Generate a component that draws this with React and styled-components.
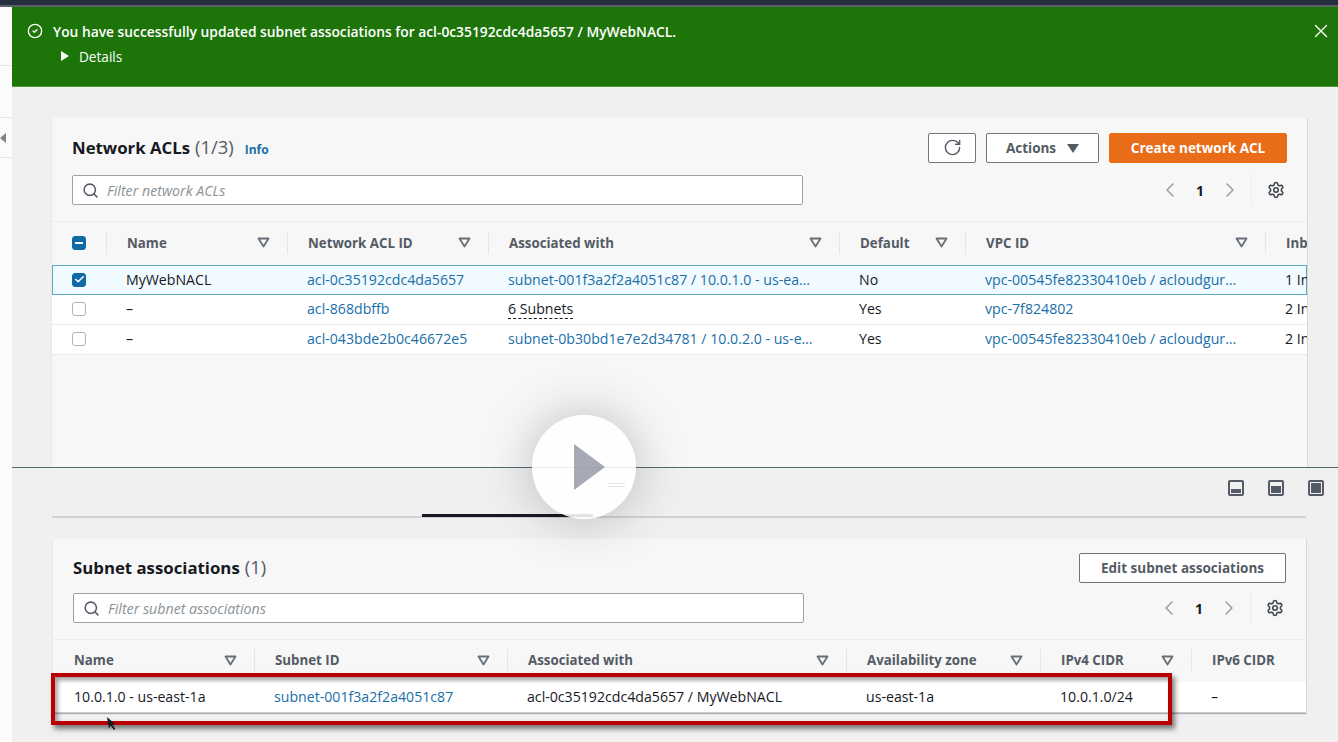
import React from 'react';
import styled, { createGlobalStyle } from 'styled-components';
import { ChevronLeft, ChevronRight, RotateCw, Search, Settings, X, CircleCheck, Check } from 'lucide-react';

const GlobalStyle = createGlobalStyle`
  html, body { margin: 0; padding: 0; }
  body {
    width: 1338px;
    height: 742px;
    overflow: hidden;
    background: #f0f0f0;
    font-family: "Open Sans", "Liberation Sans", sans-serif;
    font-size: 14px;
    color: #16191f;
  }
`;

const Page = styled.div`
  position: relative;
  width: 1338px;
  height: 742px;
  display: flex;
  flex-direction: column;
  overflow: hidden;
`;

const TopBar = styled.div`
  height: 5px;
  flex: none;
  background: #232f3e;
  border-bottom: 2px solid #5c6068;
`;

const Body = styled.div`
  flex: 1;
  display: flex;
  min-height: 0;
`;

const Sidebar = styled.aside`
  width: 12px;
  flex: none;
  background: #fbfbfb;
  display: flex;
  flex-direction: column;
`;

const SideBlock = styled.div`
  height: ${p => p.$h}px;
  flex: none;
  display: flex;
  align-items: center;
  border-bottom: 1px solid #e4e6e6;
`;

const SideArrow = styled.div`
  width: 0;
  height: 0;
  border-top: 5px solid transparent;
  border-bottom: 5px solid transparent;
  border-right: 6px solid #7d8389;
`;

const Main = styled.main`
  flex: 1;
  min-width: 0;
  display: flex;
  flex-direction: column;
`;

const Flash = styled.div`
  height: 80px;
  flex: none;
  box-sizing: border-box;
  background: #1d7409;
  border-bottom: 1px solid #4f9a3f;
  color: #fff;
  padding: 13px 6px 0 15px;
  display: flex;
  justify-content: space-between;
`;

const FlashBody = styled.div`
  display: flex;
  flex-direction: column;
  gap: 4px;
`;

const FlashLine = styled.div`
  display: flex;
  align-items: center;
  gap: 10px;
  height: 22px;
  font-weight: 600;
  font-size: 13.8px;
`;

const Details = styled.div`
  display: flex;
  align-items: center;
  gap: 10px;
  height: 20px;
  margin-left: 34px;
  font-size: 13.6px;
`;

const DetailsArrow = styled.span`
  width: 0;
  height: 0;
  border-top: 5px solid transparent;
  border-bottom: 5px solid transparent;
  border-left: 8px solid #fff;
`;

const Upper = styled.section`
  height: 381px;
  flex: none;
  box-sizing: border-box;
  padding: 31px 31px 0 40px;
  border-bottom: 1px solid #56696b;
  display: flex;
`;

const Panel = styled.div`
  flex: 1;
  min-width: 0;
  background: #f7f7f7;
  box-shadow: 1px 0 0 #d5d9d9, -1px 0 0 #e8e9e9${p => (p.$shadow ? ', 0 1px 1px rgba(0, 27, 43, 0.3)' : '')};
  display: flex;
  flex-direction: column;
`;

const PanelHead = styled.div`
  padding: ${p => (p.$tight ? 14 : 15)}px 20px 0 20px;
  display: flex;
  flex-direction: column;
  gap: ${p => (p.$tight ? 10 : 12)}px;
  height: ${p => (p.$tight ? 100 : 103)}px;
  box-sizing: border-box;
  flex: none;
`;

const HeadRow = styled.div`
  display: flex;
  align-items: center;
  justify-content: space-between;
  height: 30px;
`;

const Title = styled.h2`
  margin: 0 0 4px;
  font-size: 16.8px;
  font-weight: 700;
  color: #16191f;
  display: flex;
  align-items: baseline;
`;

const Count = styled.span`
  font-size: 18.4px;
  font-weight: 400;
  color: #545b64;
  margin-left: 5px;
`;

const InfoLink = styled.a`
  font-size: 12px;
  font-weight: 700;
  color: #1a6fa8;
  margin-left: 11px;
`;

const Actions = styled.div`
  display: flex;
  gap: 10px;
`;

const Button = styled.button`
  height: 30px;
  width: ${p => p.$w}px;
  box-sizing: border-box;
  padding: 0 0 1px;
  border: 1px solid ${p => (p.$primary ? '#ec7211' : '#6f767d')};
  border-radius: 2px;
  background: ${p => (p.$primary ? '#e96c19' : '#ffffff')};
  color: ${p => (p.$primary ? '#ffffff' : '#545b64')};
  font-family: inherit;
  font-size: 13.5px;
  font-weight: 700;
  display: flex;
  align-items: center;
  justify-content: center;
  gap: 11px;
`;

const Caret = styled.span`
  width: 0;
  height: 0;
  margin-top: 1px;
  border-left: 6px solid transparent;
  border-right: 6px solid transparent;
  border-top: 9px solid #545b64;
`;

const SearchBox = styled.div`
  width: 731px;
  height: 30px;
  box-sizing: border-box;
  background: #fff;
  border: 1px solid #9ba2a6;
  border-radius: 2px;
  display: flex;
  align-items: center;
  gap: 8px;
  padding-left: 9px;
  color: #545b64;
`;

const Placeholder = styled.span`
  font-style: italic;
  font-size: 14.2px;
  color: #8a9297;
`;

const Pager = styled.div`
  display: flex;
  align-items: center;
  color: #16191f;
  margin-right: 2px;
`;

const PageNum = styled.span`
  width: 36px;
  text-align: center;
  font-weight: 700;
  font-size: 14px;
`;

const PagerDivider = styled.span`
  width: 1px;
  height: 30px;
  background: #eaeded;
  margin: 0 15px 0 9px;
`;

const Table = styled.div`
  display: flex;
  flex-direction: column;
  overflow: hidden;
`;

const HeaderRow = styled.div`
  display: grid;
  grid-template-columns: ${p => p.$cols};
  height: ${p => p.$h}px;
  padding-bottom: 2px;
  align-items: center;
  border-top: 1px solid #eaeded;
  box-sizing: border-box;
`;

const HeaderCell = styled.div`
  height: 22px;
  display: flex;
  align-items: center;
  justify-content: space-between;
  padding: 0 17px 0 20px;
  ${p => !p.$first && 'border-left: 1px solid #e3e6e6;'}
  ${p => p.$first && 'padding-left: 21px;'}
  font-weight: 700;
  font-size: 13.3px;
  color: #545b64;
  white-space: nowrap;
`;

const CheckHead = styled.div`
  padding-left: 20px;
  display: flex;
  align-items: center;
`;

const Row = styled.div`
  display: grid;
  grid-template-columns: ${p => p.$cols};
  height: ${p => p.$h}px;
  box-sizing: border-box;
  padding-bottom: 1px;
  align-items: center;
  background: ${p => (p.$selected ? '#f1faff' : '#ffffff')};
  border-bottom: 1px solid ${p => (p.$last ? '#c9cdcd' : '#eaeded')};
  ${p => p.$selected && 'border-bottom: none; box-shadow: inset 0 0 0 1px #62a9c4;'}
`;

const Cell = styled.div`
  padding: 0 ${p => (p.$clip ? 24 : 8)}px 0 ${p => p.$pad || 20}px;
  line-height: 20px;
  white-space: nowrap;
  overflow: hidden;
  text-overflow: ellipsis;
  font-size: 14.15px;
  color: ${p => (p.$link ? '#1a6fa8' : '#16191f')};
`;

const Dashed = styled.span`
  display: inline-block;
  line-height: 18px;
  border-bottom: 1px dashed #16191f;
`;

const Box = styled.span`
  width: 14px;
  height: 14px;
  box-sizing: border-box;
  border-radius: 3px;
  border: 1px solid ${p => (p.$on ? '#0f6aa6' : '#aab7b8')};
  background: ${p => (p.$on ? '#0f6aa6' : '#ffffff')};
  display: flex;
  align-items: center;
  justify-content: center;
  color: #fff;
`;

const Minus = styled.span`
  width: 8px;
  height: 2px;
  background: #fff;
`;

const BoxCell = styled.div`
  padding-left: ${p => p.$pad}px;
  display: flex;
`;

const Lower = styled.section`
  flex: 1;
  min-height: 0;
  display: flex;
  flex-direction: column;
  padding: 0 32px 0 40px;
`;

const SplitBar = styled.div`
  height: 39px;
  flex: none;
  display: flex;
  justify-content: flex-end;
  align-items: center;
  gap: 24px;
  margin-right: -18px;
`;

const TabStrip = styled.div`
  height: 9px;
  flex: none;
  border-bottom: 2px solid #d0d3d3;
  display: flex;
  align-items: flex-end;
  margin-bottom: 21px;
`;

const ActiveTab = styled.div`
  margin-left: 370px;
  width: 171px;
  height: 3px;
  margin-bottom: -1px;
  background: #16191f;
`;

const LowerPanelWrap = styled.div`
  display: flex;
  margin-left: 1px;
`;

const Highlight = styled.div`
  position: absolute;
  left: 51px;
  top: 673px;
  width: 1121px;
  height: 52px;
  box-sizing: border-box;
  border: 4px solid #b90000;
  box-shadow: 3px 4px 5px rgba(0, 0, 0, 0.5), inset 3px 3px 4px rgba(0, 0, 0, 0.35);
  pointer-events: none;
`;

const PointerMark = styled.svg`
  position: absolute;
  left: 106px;
  top: 716px;
`;

const PlayCircle = styled.div`
  position: absolute;
  left: 532px;
  top: 415px;
  width: 104px;
  height: 104px;
  border-radius: 50%;
  background: rgba(255, 255, 255, 0.88);
  box-shadow: 0 0 50px rgba(40, 40, 60, 0.28);
  display: flex;
  align-items: center;
  justify-content: center;
`;

const PlayMark = styled.span`
  width: 0;
  height: 0;
  margin-left: 10px;
  border-top: 23px solid transparent;
  border-bottom: 23px solid transparent;
  border-left: 31px solid rgba(130, 132, 148, 0.7);
`;

const DragHandle = styled.span`
  position: absolute;
  left: 76px;
  top: 68px;
  width: 17px;
  height: 2px;
  border-top: 1px solid #e2e4e4;
  border-bottom: 1px solid #e2e4e4;
`;

const FilterMark = () => (
  <svg width="13" height="11" viewBox="0 0 13 11" style={{ flex: 'none' }}>
    <path d="M1.5 1.5h10L6.5 9.5z" fill="none" stroke="#687078" strokeWidth="1.8" strokeLinejoin="round" />
  </svg>
);

const SplitIcon = ({ y, h }) => (
  <svg width="16" height="16" viewBox="0 0 16 16">
    <rect x="1" y="1" width="14" height="14" rx="1" fill="none" stroke="#545b64" strokeWidth="2" />
    <rect x="3" y={y} width="10" height={h} fill="#545b64" />
  </svg>
);

const PagerBlock = () => (
  <Pager>
    <ChevronLeft size={24} strokeWidth={1.4} color="#8d9a9c" />
    <PageNum>1</PageNum>
    <ChevronRight size={24} strokeWidth={1.4} color="#8d9a9c" />
    <PagerDivider />
    <Settings size={18} strokeWidth={2.1} color="#414750" />
  </Pager>
);

const aclCols = '54px 181px 201px 351px 126px 300px 120px';
const subnetCols = '201px 253px 339px 194px 151px 115px';

const aclHeaders = ['Name', 'Network ACL ID', 'Associated with', 'Default', 'VPC ID'];
const subnetHeaders = ['Name', 'Subnet ID', 'Associated with', 'Availability zone', 'IPv4 CIDR'];

const aclRows = [
  {
    name: 'MyWebNACL',
    id: 'acl-0c35192cdc4da5657',
    assoc: 'subnet-001f3a2f2a4051c87 / 10.0.1.0 - us-east-1a',
    def: 'No',
    vpc: 'vpc-00545fe82330410eb / acloudguru-vpc',
    inb: '1 In',
    selected: true,
  },
  { name: '–', id: 'acl-868dbffb', assoc: '6 Subnets', dashed: true, def: 'Yes', vpc: 'vpc-7f824802', inb: '2 In' },
  {
    name: '–',
    id: 'acl-043bde2b0c46672e5',
    assoc: 'subnet-0b30bd1e7e2d34781 / 10.0.2.0 - us-east-1b',
    def: 'Yes',
    vpc: 'vpc-00545fe82330410eb / acloudguru-vpc',
    inb: '2 In',
  },
];

export default function App() {
  return (
    <Page>
      <GlobalStyle />
      <TopBar />
      <Body>
        <Sidebar>
          <SideBlock $h={58} />
          <SideBlock $h={51} />
          <SideBlock $h={39}><SideArrow /></SideBlock>
        </Sidebar>
        <Main>
          <Flash>
            <FlashBody>
              <FlashLine>
                <CircleCheck size={16} strokeWidth={2} />
                You have successfully updated subnet associations for acl-0c35192cdc4da5657 / MyWebNACL.
              </FlashLine>
              <Details><DetailsArrow />Details</Details>
            </FlashBody>
            <X size={22} strokeWidth={1.5} />
          </Flash>

          <Upper>
            <Panel>
              <PanelHead>
                <HeadRow>
                  <Title>Network ACLs<Count>(1/3)</Count><InfoLink>Info</InfoLink></Title>
                  <Actions>
                    <Button $w={48}><RotateCw size={19} strokeWidth={1.8} color="#545b64" /></Button>
                    <Button $w={113}>Actions<Caret /></Button>
                    <Button $w={178} $primary>Create network ACL</Button>
                  </Actions>
                </HeadRow>
                <HeadRow>
                  <SearchBox><Search size={17} strokeWidth={2.2} /><Placeholder>Filter network ACLs</Placeholder></SearchBox>
                  <PagerBlock />
                </HeadRow>
              </PanelHead>
              <Table>
                <HeaderRow $cols={aclCols} $h={44}>
                  <CheckHead><Box $on><Minus /></Box></CheckHead>
                  {aclHeaders.map(h => (
                    <HeaderCell key={h}>{h}<FilterMark /></HeaderCell>
                  ))}
                  <HeaderCell>Inbound rules</HeaderCell>
                </HeaderRow>
                {aclRows.map(r => (
                  <Row key={r.id} $cols={aclCols} $h={30} $selected={r.selected}>
                    <BoxCell $pad={20}>
                      <Box $on={r.selected}>{r.selected && <Check size={11} strokeWidth={3.5} />}</Box>
                    </BoxCell>
                    <Cell>{r.name}</Cell>
                    <Cell $link>{r.id}</Cell>
                    <Cell $clip $link={!r.dashed}>{r.dashed ? <Dashed>{r.assoc}</Dashed> : r.assoc}</Cell>
                    <Cell>{r.def}</Cell>
                    <Cell $clip $link>{r.vpc}</Cell>
                    <Cell>{r.inb}</Cell>
                  </Row>
                ))}
              </Table>
            </Panel>
          </Upper>

          <Lower>
            <SplitBar>
              <SplitIcon y={9} h={4} />
              <SplitIcon y={6} h={7} />
              <SplitIcon y={3} h={10} />
            </SplitBar>
            <TabStrip><ActiveTab /></TabStrip>
            <LowerPanelWrap>
              <Panel $shadow>
                <PanelHead $tight>
                  <HeadRow>
                    <Title>Subnet associations<Count>(1)</Count></Title>
                    <Button $w={207}>Edit subnet associations</Button>
                  </HeadRow>
                  <HeadRow>
                    <SearchBox><Search size={17} strokeWidth={2.2} /><Placeholder>Filter subnet associations</Placeholder></SearchBox>
                    <PagerBlock />
                  </HeadRow>
                </PanelHead>
                <Table>
                  <HeaderRow $cols={subnetCols} $h={43}>
                    {subnetHeaders.map((h, i) => (
                      <HeaderCell key={h} $first={i === 0}>{h}<FilterMark /></HeaderCell>
                    ))}
                    <HeaderCell>IPv6 CIDR</HeaderCell>
                  </HeaderRow>
                  <Row $cols={subnetCols} $h={31} $last>
                    <Cell $pad={21}>10.0.1.0 - us-east-1a</Cell>
                    <Cell $link>subnet-001f3a2f2a4051c87</Cell>
                    <Cell>acl-0c35192cdc4da5657 / MyWebNACL</Cell>
                    <Cell>us-east-1a</Cell>
                    <Cell>10.0.1.0/24</Cell>
                    <Cell>–</Cell>
                  </Row>
                </Table>
              </Panel>
            </LowerPanelWrap>
          </Lower>
        </Main>
      </Body>

      <Highlight />
      <PointerMark width="10" height="15" viewBox="0 0 10 15">
        <path d="M1 1l2 12 1.6-3.6L8 14l1.4-1.2L6 8.6l3-.6z" fill="#16191f" />
      </PointerMark>
      <PlayCircle><PlayMark /><DragHandle /></PlayCircle>
    </Page>
  );
}
